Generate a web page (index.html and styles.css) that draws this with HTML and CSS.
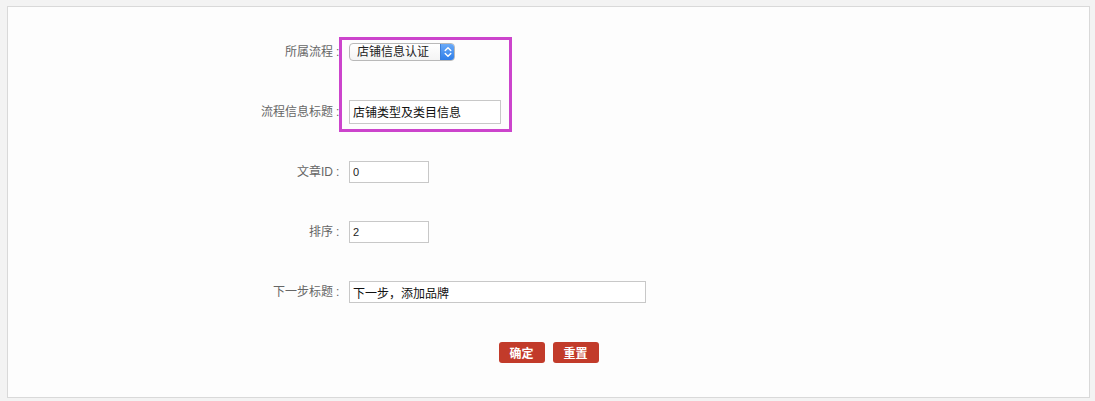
FILE: index.html
```html
<!DOCTYPE html>
<html lang="zh-CN">
<head>
<meta charset="utf-8">
<title>流程信息</title>
<link rel="stylesheet" href="styles.css">
</head>
<body>
<div class="panel">
  <form class="form">
    <div class="row r1">
      <label class="label">所属流程<span class="colon">:</span></label>
      <div class="field">
        <div class="select">
          <select class="select-native">
            <option>店铺信息认证</option>
          </select>
          <span class="stepper">
            <svg width="8" height="12" viewBox="0 0 8 12"><path d="M1.2 4.6 L4 1.8 L6.8 4.6 M1.2 7.4 L4 10.2 L6.8 7.4" fill="none" stroke="#fff" stroke-width="1.4" stroke-linecap="round" stroke-linejoin="round"/></svg>
          </span>
        </div>
      </div>
    </div>
    <div class="row r2">
      <label class="label">流程信息标题<span class="colon">:</span></label>
      <div class="field"><input class="input w-title" type="text" value="店铺类型及类目信息"></div>
    </div>
    <div class="row r3">
      <label class="label">文章ID<span class="colon">:</span></label>
      <div class="field"><input class="input w-short" type="text" value="0"></div>
    </div>
    <div class="row r4">
      <label class="label">排序<span class="colon">:</span></label>
      <div class="field"><input class="input w-short" type="text" value="2"></div>
    </div>
    <div class="row r5">
      <label class="label">下一步标题<span class="colon">:</span></label>
      <div class="field"><input class="input w-long" type="text" value="下一步，添加品牌"></div>
    </div>
    <div class="actions">
      <button class="btn" type="button">确定</button>
      <button class="btn" type="button">重置</button>
    </div>
  </form>
  <div class="highlight"></div>
</div>
</body>
</html>
```

FILE: styles.css
```css
* { box-sizing: border-box; }

html, body {
  margin: 0;
  padding: 0;
  background: #f3f3f3;
  font-family: "Liberation Sans", "Noto Sans CJK SC", sans-serif;
  font-size: 12px;
  color: #666;
}

.panel {
  position: relative;
  margin: 6px 5px 0 7px;
  height: 392px;
  border: 1px solid #d9d9d9;
  background: #fdfdfd;
}

.form {
  padding-top: 15px;
}

.row {
  display: grid;
  grid-template-columns: 337px 1fr;
  column-gap: 4px;
  align-items: center;
  height: 60px;
}

.r2 { height: 59px; }
.r3 { height: 61px; }

.label {
  text-align: right;
  color: #666;
  line-height: 16px;
}

.colon {
  display: inline-block;
  width: 12px;
  text-align: left;
  padding-left: 3px;
}

.field {
  display: flex;
  align-items: center;
}

.select {
  display: inline-flex;
  align-items: stretch;
  width: 106px;
  height: 18px;
  border: 1px solid #b9b9b9;
  border-radius: 4px;
  background: linear-gradient(#ffffff, #f4f4f4);
  overflow: hidden;
}

.select-native {
  appearance: none;
  -webkit-appearance: none;
  flex: 1;
  min-width: 0;
  border: 0;
  margin: 0;
  padding: 0 0 0 7px;
  background: transparent;
  font-family: "Liberation Sans", "Noto Sans CJK SC", sans-serif;
  font-size: 12px;
  color: #222;
  line-height: 16px;
  outline: none;
}

.stepper {
  width: 14px;
  display: flex;
  align-items: center;
  justify-content: center;
  background: linear-gradient(#6aaaf8, #2f7ee9);
  border-left: 1px solid #3b7fd9;
}

.input {
  height: 22px;
  border: 1px solid #c8c8c8;
  background: #fff;
  margin: 0;
  padding: 0 3px;
  font-family: "Liberation Sans", "Noto Sans CJK SC", sans-serif;
  font-size: 12px;
  color: #111;
  outline: none;
}

.w-short { font-size: 11px; color: #222; }
.w-title { width: 152px; height: 24px; }
.w-short { width: 80px; }
.w-long { width: 297px; }

.actions {
  display: flex;
  justify-content: center;
  gap: 8px;
  padding-top: 20px;
}

.btn {
  width: 46px;
  height: 21px;
  border: 0;
  border-radius: 3px;
  background: #c23b2a;
  color: #fff;
  font-family: "Liberation Sans", "Noto Sans CJK SC", sans-serif;
  font-size: 12px;
  font-weight: bold;
  padding: 0;
}

.highlight {
  position: absolute;
  left: 331px;
  top: 30px;
  width: 173px;
  height: 95px;
  border: 3px solid #cc44cc;
  pointer-events: none;
}
```
